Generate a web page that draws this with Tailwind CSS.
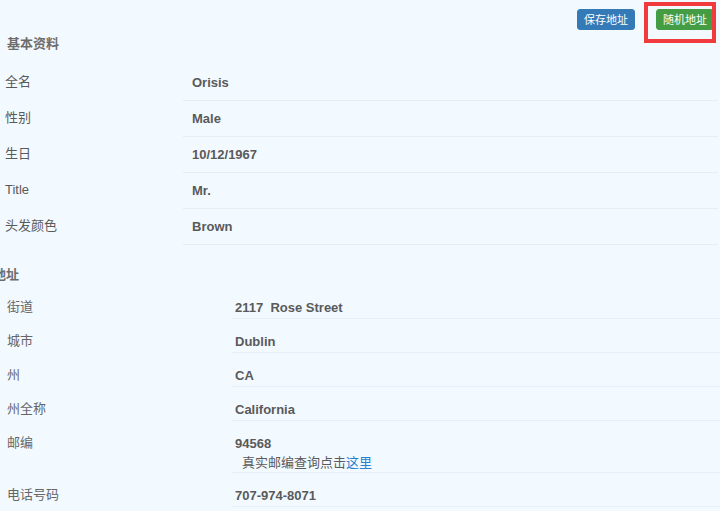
<!DOCTYPE html>
<html lang="zh-CN">
<head>
    <meta charset="UTF-8">
    <meta name="viewport" content="width=device-width, initial-scale=1.0">
    <title>基本资料</title>
    <script src="https://cdn.jsdelivr.net/npm/@tailwindcss/browser@4"></script>
</head>
<body class="min-h-screen overflow-x-hidden bg-[#f2f9ff] font-['Liberation_Sans','Noto_Sans_CJK_SC',sans-serif] text-[13px] leading-5 text-[#5a5a5a]">
    <!-- Botones -->
    <header class="flex justify-end gap-[21px] pt-[9px] pr-1.5">
        <button type="button" class="h-[21px] rounded-[3px] border border-[#337ab7] bg-[#337ab7] px-1.5 text-[11px] leading-4 text-white">保存地址</button>
        <div class="relative flex">
            <button type="button" class="h-[21px] rounded-[3px] border border-[#449d44] bg-[#449d44] px-1.5 text-[11px] leading-4 text-white">随机地址</button>
            <!-- Marco rojo -->
            <span class="pointer-events-none absolute -top-[7px] -right-0.5 -bottom-[13px] -left-3 border-4 border-[#f03a3e]"></span>
        </div>
    </header>

    <!-- Datos básicos -->
    <section class="pr-0.5">
        <h2 class="mt-1 mb-[11px] pl-[7px] font-bold text-[#6c6c6c]">基本资料</h2>
        <table class="w-full table-fixed border-separate border-spacing-0 text-left">
            <tbody>
                <tr class="h-9">
                    <th scope="row" class="w-[183px] pb-0.5 pl-[5px] font-normal">全名</th>
                    <td class="border-b border-[#e9edf1] pt-px pl-[9px] font-bold">Orisis</td>
                </tr>
                <tr class="h-9">
                    <th scope="row" class="pb-0.5 pl-[5px] font-normal">性别</th>
                    <td class="border-b border-[#e9edf1] pt-px pl-[9px] font-bold">Male</td>
                </tr>
                <tr class="h-9">
                    <th scope="row" class="pb-0.5 pl-[5px] font-normal">生日</th>
                    <td class="border-b border-[#e9edf1] pt-px pl-[9px] font-bold">10/12/1967</td>
                </tr>
                <tr class="h-9">
                    <th scope="row" class="pb-0.5 pl-[5px] font-normal">Title</th>
                    <td class="border-b border-[#e9edf1] pt-px pl-[9px] font-bold">Mr.</td>
                </tr>
                <tr class="h-9">
                    <th scope="row" class="pb-0.5 pl-[5px] font-normal">头发颜色</th>
                    <td class="border-b border-[#e9edf1] pt-px pl-[9px] font-bold">Brown</td>
                </tr>
            </tbody>
        </table>
    </section>

    <!-- Dirección -->
    <section>
        <h2 class="mt-5 -ml-[7px] font-bold text-[#6c6c6c]">地址</h2>
        <table class="w-full table-fixed border-separate border-spacing-0 text-left">
            <tbody class="align-top">
                <tr>
                    <th scope="row" class="w-[232px] pt-3 pl-[7px] font-normal text-[#666]">街道</th>
                    <td class="border-b border-[#e9eff6] pt-[13px] pl-[3px] font-bold">2117&nbsp; Rose Street</td>
                </tr>
                <tr>
                    <th scope="row" class="pt-3 pl-[7px] font-normal text-[#666]">城市</th>
                    <td class="border-b border-[#e9eff6] pt-[13px] pl-[3px] font-bold">Dublin</td>
                </tr>
                <tr>
                    <th scope="row" class="pt-3 pl-[7px] font-normal text-[#666]">州</th>
                    <td class="border-b border-[#e9eff6] pt-[13px] pl-[3px] font-bold">CA</td>
                </tr>
                <tr>
                    <th scope="row" class="pt-3 pl-[7px] font-normal text-[#666]">州全称</th>
                    <td class="border-b border-[#e9eff6] pt-[13px] pl-[3px] font-bold">California</td>
                </tr>
                <tr>
                    <th scope="row" class="pt-3 pl-[7px] font-normal text-[#666]">邮编</th>
                    <td class="border-b border-[#e9eff6] pt-[13px] pl-[3px] font-bold">
                        94568
                        <p class="pl-[7px] leading-[18px] font-normal">真实邮编查询点击<a href="#" class="text-[#2a7fd0]">这里</a></p>
                    </td>
                </tr>
                <tr>
                    <th scope="row" class="pt-3 pl-[7px] font-normal text-[#666]">电话号码</th>
                    <td class="border-b border-[#e9eff6] pt-[13px] pl-[3px] font-bold">707-974-8071</td>
                </tr>
            </tbody>
        </table>
    </section>
</body>
</html>
